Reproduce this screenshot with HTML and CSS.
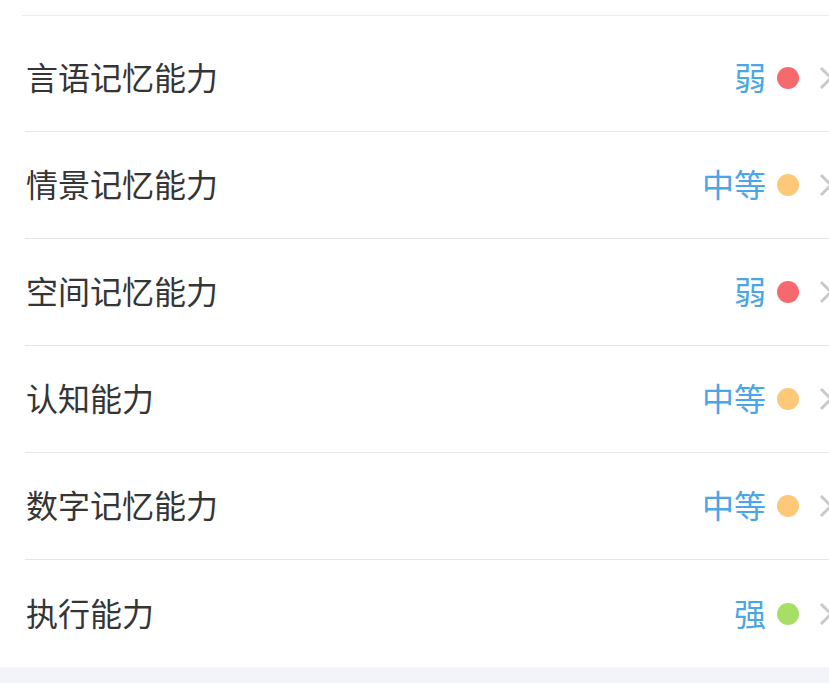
FILE: index.html
```html
<!DOCTYPE html>
<html lang="zh">
<head>
<meta charset="utf-8">
<link rel="stylesheet" href="styles.css">
</head>
<body>
<div class="page">
  <div class="top-line"></div>
  <ul class="list">
    <li class="row">
      <span class="label">言语记忆能力</span>
      <span class="result"><span class="level">弱</span><span class="dot dot-weak"></span><svg class="chev" width="16" height="24" viewBox="0 0 16 24"><polyline points="2,2 12,12 2,22" fill="none" stroke="#c9c9c9" stroke-width="3"/></svg></span>
    </li>
    <li class="row">
      <span class="label">情景记忆能力</span>
      <span class="result"><span class="level">中等</span><span class="dot dot-mid"></span><svg class="chev" width="16" height="24" viewBox="0 0 16 24"><polyline points="2,2 12,12 2,22" fill="none" stroke="#c9c9c9" stroke-width="3"/></svg></span>
    </li>
    <li class="row">
      <span class="label">空间记忆能力</span>
      <span class="result"><span class="level">弱</span><span class="dot dot-weak"></span><svg class="chev" width="16" height="24" viewBox="0 0 16 24"><polyline points="2,2 12,12 2,22" fill="none" stroke="#c9c9c9" stroke-width="3"/></svg></span>
    </li>
    <li class="row">
      <span class="label">认知能力</span>
      <span class="result"><span class="level">中等</span><span class="dot dot-mid"></span><svg class="chev" width="16" height="24" viewBox="0 0 16 24"><polyline points="2,2 12,12 2,22" fill="none" stroke="#c9c9c9" stroke-width="3"/></svg></span>
    </li>
    <li class="row">
      <span class="label">数字记忆能力</span>
      <span class="result"><span class="level">中等</span><span class="dot dot-mid"></span><svg class="chev" width="16" height="24" viewBox="0 0 16 24"><polyline points="2,2 12,12 2,22" fill="none" stroke="#c9c9c9" stroke-width="3"/></svg></span>
    </li>
    <li class="row last">
      <span class="label">执行能力</span>
      <span class="result"><span class="level">强</span><span class="dot dot-strong"></span><svg class="chev" width="16" height="24" viewBox="0 0 16 24"><polyline points="2,2 12,12 2,22" fill="none" stroke="#c9c9c9" stroke-width="3"/></svg></span>
    </li>
  </ul>
  <div class="band"></div>
</div>
</body>
</html>
```

FILE: styles.css
```css
html, body {
  margin: 0;
  padding: 0;
  background: #ffffff;
  overflow: hidden;
}

.page {
  width: 829px;
  height: 696px;
  overflow: hidden;
  font-family: "Noto Sans CJK SC", "Noto Sans", sans-serif;
}

.top-line {
  height: 15px;
  margin-left: 22px;
  border-bottom: 1px solid #ebebeb;
  margin-bottom: 9px;
}

.list {
  list-style: none;
  margin: 0;
  padding: 0;
}

.row {
  display: flex;
  align-items: center;
  justify-content: space-between;
  box-sizing: border-box;
  height: 107px;
  padding-bottom: 4px;
  margin-left: 25px;
  border-bottom: 1px solid #e6e6e6;
}

.row.last {
  border-bottom: none;
  height: 107px;
}

.label {
  font-size: 32px;
  color: #353535;
  line-height: 1;
  margin-left: 1px;
}

.result {
  display: flex;
  align-items: center;
  margin-right: -6px;
}

.level {
  font-size: 32px;
  color: #4aa6e6;
  line-height: 1;
}

.dot {
  width: 22px;
  height: 22px;
  border-radius: 50%;
  margin-left: 11px;
  margin-top: 4px;
}

.dot-weak { background: #f66a6d; }
.dot-mid { background: #fdc877; }
.dot-strong { background: #a7de66; }

.chev {
  display: block;
  margin-left: 20px;
  margin-top: 4px;
}

.band {
  height: 16px;
  background: #f2f4f7;
}
```
